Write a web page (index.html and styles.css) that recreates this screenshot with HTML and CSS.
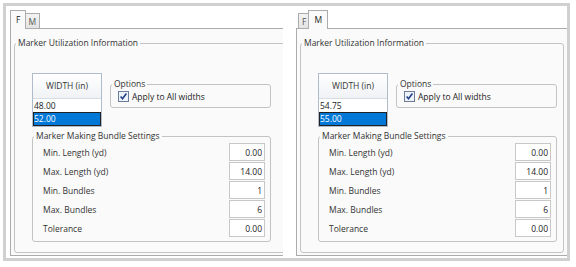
FILE: index.html
```html
<!DOCTYPE html>
<html lang="en">
<head>
  <meta charset="UTF-8">
  <title>Marker Utilization</title>
  <link rel="stylesheet" href="styles.css">
</head>
<body>

  <div class="frame">

    <!-- Pestaña F -->
    <div class="pane pane-left">
      <div class="tabs">
        <span class="tab active">F</span>
        <span class="tab">M</span>
      </div>
      <div class="panel">
        <fieldset class="group main">
          <legend>Marker Utilization Information</legend>
          <div class="top-row">
            <div class="width-list">
              <div class="width-head">WIDTH (in)</div>
              <div class="width-item">48.00</div>
              <div class="width-item selected">52.00</div>
            </div>
            <fieldset class="group options">
              <legend>Options</legend>
              <label class="check">
                <svg width="11" height="11" viewBox="0 0 11 11">
                  <rect x="0.5" y="0.5" width="10" height="10" fill="#eef3fb" stroke="#6d7d99"/>
                  <path d="M2.6 5.6 L4.5 7.8 L8.4 2.6" fill="none" stroke="#233f8c" stroke-width="1.6"/>
                </svg>
                Apply to All widths
              </label>
            </fieldset>
          </div>
          <fieldset class="group bundle">
            <legend>Marker Making Bundle Settings</legend>
            <div class="field"><span>Min. Length (yd)</span><input value="0.00"></div>
            <div class="field"><span>Max. Length (yd)</span><input value="14.00"></div>
            <div class="field"><span>Min. Bundles</span><input value="1"></div>
            <div class="field"><span>Max. Bundles</span><input value="6"></div>
            <div class="field"><span>Tolerance</span><input value="0.00"></div>
          </fieldset>
        </fieldset>
      </div>
    </div>

    <!-- Pestaña M -->
    <div class="pane pane-right">
      <div class="tabs">
        <span class="tab">F</span>
        <span class="tab active">M</span>
      </div>
      <div class="panel">
        <fieldset class="group main">
          <legend>Marker Utilization Information</legend>
          <div class="top-row">
            <div class="width-list">
              <div class="width-head">WIDTH (in)</div>
              <div class="width-item">54.75</div>
              <div class="width-item selected">55.00</div>
            </div>
            <fieldset class="group options">
              <legend>Options</legend>
              <label class="check">
                <svg width="11" height="11" viewBox="0 0 11 11">
                  <rect x="0.5" y="0.5" width="10" height="10" fill="#eef3fb" stroke="#6d7d99"/>
                  <path d="M2.6 5.6 L4.5 7.8 L8.4 2.6" fill="none" stroke="#233f8c" stroke-width="1.6"/>
                </svg>
                Apply to All widths
              </label>
            </fieldset>
          </div>
          <fieldset class="group bundle">
            <legend>Marker Making Bundle Settings</legend>
            <div class="field"><span>Min. Length (yd)</span><input value="0.00"></div>
            <div class="field"><span>Max. Length (yd)</span><input value="14.00"></div>
            <div class="field"><span>Min. Bundles</span><input value="1"></div>
            <div class="field"><span>Max. Bundles</span><input value="6"></div>
            <div class="field"><span>Tolerance</span><input value="0.00"></div>
          </fieldset>
        </fieldset>
      </div>
    </div>

  </div>

</body>
</html>
```

FILE: styles.css
```css
body {
  margin: 0;
  background: #fff;
  font-family: "Open Sans", "Noto Sans", sans-serif;
  font-size: 8.5px;
  color: #222;
}
.frame {
  margin: 3px;
  width: 557px;
  height: 248px;
  border: 3px solid #d0d0d0;
  padding: 4px 0 0 4px;
  display: flex;
  gap: 13px;
  overflow: hidden;
}
.pane {
  overflow: hidden;
  flex: none;
}
.pane-left {
  width: 273px;
}
.pane-right {
  width: 271px;
}
.tabs {
  display: flex;
  align-items: flex-end;
  height: 18px;
  padding-left: 2px;
}
.tab {
  height: 15px;
  line-height: 15px;
  padding: 0 3px;
  border: 1px solid #acacac;
  border-bottom: none;
  background: linear-gradient(#f3f3f3, #e4e4e4);
  color: #555;
  box-sizing: border-box;
}
.tab.active {
  height: 19px;
  line-height: 18px;
  margin: 0 -2px -1px -2px;
  padding: 0 5px;
  background: #fafafa;
  color: #222;
  position: relative;
  z-index: 1;
}
.panel {
  width: 300px;
  height: 228px;
  border: 1px solid #acacac;
  background: #fafafa;
  padding: 8px 0 0 3px;
  box-sizing: border-box;
}
.pane-right .panel {
  width: 272px;
}
.group {
  margin: 0;
  border: 1px solid #c3c3c3;
  border-radius: 3px;
  padding: 0;
}
.group legend {
  padding: 0 2px;
  margin-left: 1px;
  line-height: 12px;
  color: #333;
}
.main {
  height: 216px;
  padding-top: 24px;
  box-sizing: border-box;
}
.pane-right .main {
  width: 264px;
}
.top-row {
  display: flex;
  align-items: flex-start;
  gap: 8px;
  margin-left: 17px;
}
.width-list {
  width: 70px;
  height: 54px;
  border: 1px solid #aebccc;
  background: #fff;
  box-sizing: border-box;
}
.width-head {
  height: 24px;
  line-height: 24px;
  text-align: center;
  background: linear-gradient(#ffffff, #f0f2f5);
  border-bottom: 1px solid #d5dde6;
  color: #333;
}
.width-item {
  height: 13px;
  line-height: 13px;
  padding-left: 1px;
}
.width-item.selected {
  background: #0078d7;
  color: #fff;
  outline: 1px solid #222;
  outline-offset: -1px;
  height: 14px;
}
.options {
  margin-top: 5px;
  width: 161px;
  height: 30px;
  box-sizing: border-box;
  padding-top: 1px;
}
.check {
  display: flex;
  align-items: center;
  gap: 3px;
  margin-left: 7px;
}
.bundle {
  margin: 3px 0 0 17px;
  width: 239px;
  height: 112px;
  box-sizing: border-box;
  padding-top: 1px;
}
.field {
  display: flex;
  justify-content: space-between;
  align-items: center;
  height: 18px;
  margin: 0 5px 1px 10px;
  color: #333;
}
.field input {
  width: 36px;
  height: 18px;
  box-sizing: border-box;
  border: 1px solid #c8c8c8;
  background: #fff;
  font: inherit;
  color: #222;
  text-align: right;
  padding: 0 2px;
  margin: 0;
}
```
